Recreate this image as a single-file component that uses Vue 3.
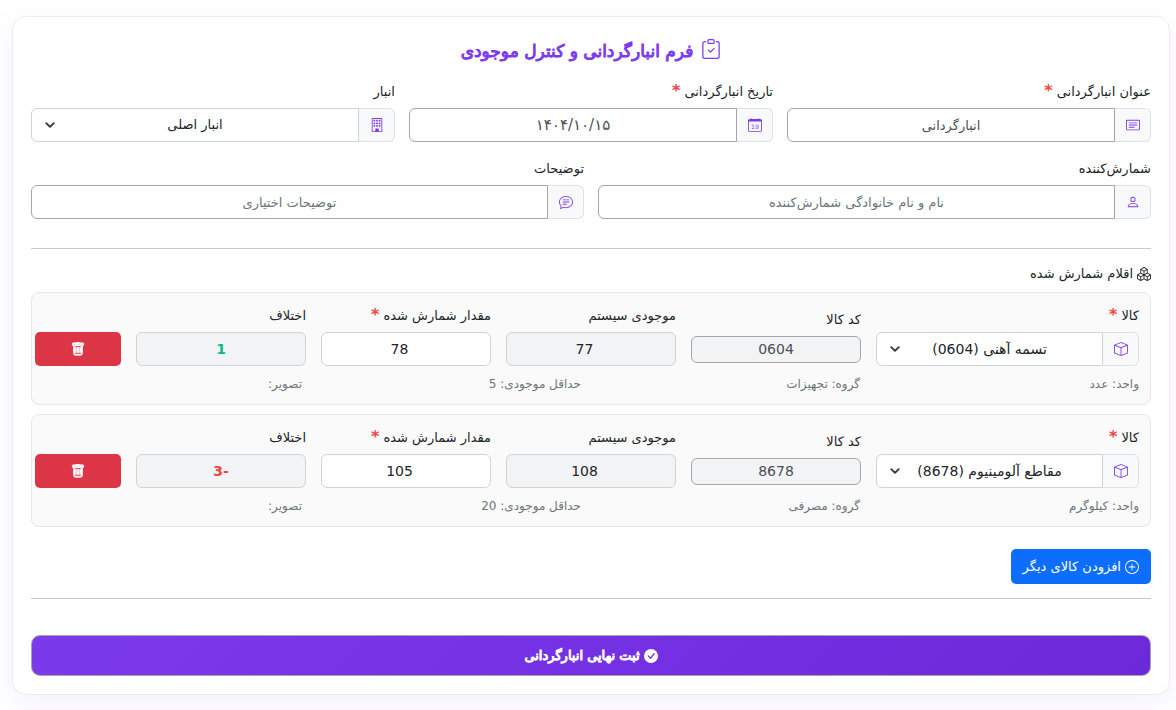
<script setup>
import { reactive, h } from 'vue'

const icons = {
  clipboard: [
    'M10.854 7.146a.5.5 0 0 1 0 .708l-3 3a.5.5 0 0 1-.708 0l-1.5-1.5a.5.5 0 1 1 .708-.708L7.5 9.793l2.646-2.647a.5.5 0 0 1 .708 0',
    'M4 1.5H3a2 2 0 0 0-2 2V14a2 2 0 0 0 2 2h10a2 2 0 0 0 2-2V3.5a2 2 0 0 0-2-2h-1v1h1a1 1 0 0 1 1 1V14a1 1 0 0 1-1 1H3a1 1 0 0 1-1-1V3.5a1 1 0 0 1 1-1h1z',
    'M9.5 1a.5.5 0 0 1 .5.5v1a.5.5 0 0 1-.5.5h-3a.5.5 0 0 1-.5-.5v-1a.5.5 0 0 1 .5-.5zm-3-1A1.5 1.5 0 0 0 5 1.5v1A1.5 1.5 0 0 0 6.5 4h3A1.5 1.5 0 0 0 11 2.5v-1A1.5 1.5 0 0 0 9.5 0z',
  ],
  card: [
    'M14.5 3a.5.5 0 0 1 .5.5v9a.5.5 0 0 1-.5.5h-13a.5.5 0 0 1-.5-.5v-9a.5.5 0 0 1 .5-.5zm-13-1A1.5 1.5 0 0 0 0 3.5v9A1.5 1.5 0 0 0 1.5 14h13a1.5 1.5 0 0 0 1.5-1.5v-9A1.5 1.5 0 0 0 14.5 2z',
    'M3 5.5a.5.5 0 0 1 .5-.5h9a.5.5 0 0 1 0 1h-9a.5.5 0 0 1-.5-.5M3 8a.5.5 0 0 1 .5-.5h9a.5.5 0 0 1 0 1h-9A.5.5 0 0 1 3 8m0 2.5a.5.5 0 0 1 .5-.5h6a.5.5 0 0 1 0 1h-6a.5.5 0 0 1-.5-.5',
  ],
  calendar: [
    'M3.5 0a.5.5 0 0 1 .5.5V1h8V.5a.5.5 0 0 1 1 0V1h1a2 2 0 0 1 2 2v11a2 2 0 0 1-2 2H2a2 2 0 0 1-2-2V3a2 2 0 0 1 2-2h1V.5a.5.5 0 0 1 .5-.5M1 4v10a1 1 0 0 0 1 1h12a1 1 0 0 0 1-1V4z',
  ],
  building: [
    'M4 2.5a.5.5 0 0 1 .5-.5h1a.5.5 0 0 1 .5.5v1a.5.5 0 0 1-.5.5h-1a.5.5 0 0 1-.5-.5zm3 0a.5.5 0 0 1 .5-.5h1a.5.5 0 0 1 .5.5v1a.5.5 0 0 1-.5.5h-1a.5.5 0 0 1-.5-.5zm3.5-.5a.5.5 0 0 0-.5.5v1a.5.5 0 0 0 .5.5h1a.5.5 0 0 0 .5-.5v-1a.5.5 0 0 0-.5-.5zM4 5.5a.5.5 0 0 1 .5-.5h1a.5.5 0 0 1 .5.5v1a.5.5 0 0 1-.5.5h-1a.5.5 0 0 1-.5-.5zM7.5 5a.5.5 0 0 0-.5.5v1a.5.5 0 0 0 .5.5h1a.5.5 0 0 0 .5-.5v-1a.5.5 0 0 0-.5-.5zm2.5.5a.5.5 0 0 1 .5-.5h1a.5.5 0 0 1 .5.5v1a.5.5 0 0 1-.5.5h-1a.5.5 0 0 1-.5-.5zM4.5 8a.5.5 0 0 0-.5.5v1a.5.5 0 0 0 .5.5h1a.5.5 0 0 0 .5-.5v-1a.5.5 0 0 0-.5-.5zm2.5.5a.5.5 0 0 1 .5-.5h1a.5.5 0 0 1 .5.5v1a.5.5 0 0 1-.5.5h-1a.5.5 0 0 1-.5-.5zm3.5-.5a.5.5 0 0 0-.5.5v1a.5.5 0 0 0 .5.5h1a.5.5 0 0 0 .5-.5v-1a.5.5 0 0 0-.5-.5z',
    'M2 1a1 1 0 0 1 1-1h10a1 1 0 0 1 1 1v14a1 1 0 0 1-1 1H3a1 1 0 0 1-1-1zm11 0H3v14h3v-2.5a.5.5 0 0 1 .5-.5h3a.5.5 0 0 1 .5.5V15h3z',
  ],
  person: [
    'M8 8a3 3 0 1 0 0-6 3 3 0 0 0 0 6m2-3a2 2 0 1 1-4 0 2 2 0 0 1 4 0m4 8c0 1-1 1-1 1H3s-1 0-1-1 1-4 6-4 6 3 6 4m-1-.004c-.001-.246-.154-.986-.832-1.664C11.516 10.68 10.289 10 8 10s-3.516.68-4.168 1.332c-.678.678-.83 1.418-.832 1.664z',
  ],
  chat: [
    'M2.678 11.894a1 1 0 0 1 .287.801 11 11 0 0 1-.398 2c1.395-.323 2.247-.697 2.634-.893a1 1 0 0 1 .71-.074A8 8 0 0 0 8 14c3.996 0 7-2.807 7-6s-3.004-6-7-6-7 2.808-7 6c0 1.468.617 2.83 1.678 3.894m-.493 3.905a22 22 0 0 1-.713.129c-.2.032-.352-.176-.273-.362a10 10 0 0 0 .244-.637l.003-.01c.248-.72.45-1.548.524-2.319C.743 11.37 0 9.76 0 8c0-3.866 3.582-7 8-7s8 3.134 8 7-3.582 7-8 7a9 9 0 0 1-2.347-.306c-.52.263-1.639.742-3.468 1.105',
    'M4 5.5a.5.5 0 0 1 .5-.5h7a.5.5 0 0 1 0 1h-7a.5.5 0 0 1-.5-.5M4 8a.5.5 0 0 1 .5-.5h7a.5.5 0 0 1 0 1h-7A.5.5 0 0 1 4 8m0 2.5a.5.5 0 0 1 .5-.5h4a.5.5 0 0 1 0 1h-4a.5.5 0 0 1-.5-.5',
  ],
  box: [
    'M8.186 1.113a.5.5 0 0 0-.372 0L1.846 3.5 8 5.961 14.154 3.5zM15 4.239l-6.5 2.6v7.922l6.5-2.6V4.24zM7.5 14.762V6.838L1 4.239v7.923zM7.443.184a1.5 1.5 0 0 1 1.114 0l7.129 2.852A.5.5 0 0 1 16 3.5v8.662a1 1 0 0 1-.629.928l-7.185 2.874a.5.5 0 0 1-.372 0L.63 13.09a1 1 0 0 1-.63-.928V3.5a.5.5 0 0 1 .314-.464z',
  ],
  boxes: [
    'M7.752.066a.5.5 0 0 1 .496 0l3.75 2.143a.5.5 0 0 1 .252.434v3.995l3.498 2A.5.5 0 0 1 16 9.07v4.286a.5.5 0 0 1-.252.434l-3.75 2.143a.5.5 0 0 1-.496 0l-3.502-2-3.502 2.001a.5.5 0 0 1-.496 0l-3.75-2.143A.5.5 0 0 1 0 13.357V9.071a.5.5 0 0 1 .252-.434L3.75 6.638V2.643a.5.5 0 0 1 .252-.434zM4.25 7.504 1.508 9.071l2.742 1.567 2.742-1.567zM7.5 9.933l-2.75 1.571v3.134l2.75-1.571zm1 3.134 2.75 1.571v-3.134L8.5 9.933zm.508-3.996 2.742 1.567 2.742-1.567-2.742-1.567zm2.242-2.433V3.504L8.5 5.076V8.21zM7.5 8.21V5.076L4.75 3.504v3.134zM5.258 2.643 8 4.21l2.742-1.567L8 1.076zM15 9.933l-2.75 1.571v3.134L15 13.067zM3.75 14.638v-3.134L1 9.933v3.134z',
  ],
  trash: [
    'M5.5 5.5A.5.5 0 0 1 6 6v6a.5.5 0 0 1-1 0V6a.5.5 0 0 1 .5-.5m2.5 0a.5.5 0 0 1 .5.5v6a.5.5 0 0 1-1 0V6a.5.5 0 0 1 .5-.5m3 .5a.5.5 0 0 0-1 0v6a.5.5 0 0 0 1 0z',
    'M14.5 3a1 1 0 0 1-1 1H13v9a2 2 0 0 1-2 2H5a2 2 0 0 1-2-2V4h-.5a1 1 0 0 1-1-1V2a1 1 0 0 1 1-1H6a1 1 0 0 1 1-1h2a1 1 0 0 1 1 1h3.5a1 1 0 0 1 1 1zM4.118 4 4 4.059V13a1 1 0 0 0 1 1h6a1 1 0 0 0 1-1V4.059L11.882 4zM2.5 3h11V2h-11z',
  ],
  plus: [
    'M8 15A7 7 0 1 1 8 1a7 7 0 0 1 0 14m0 1A8 8 0 1 0 8 0a8 8 0 0 0 0 16',
    'M8 4a.5.5 0 0 1 .5.5v3h3a.5.5 0 0 1 0 1h-3v3a.5.5 0 0 1-1 0v-3h-3a.5.5 0 0 1 0-1h3v-3A.5.5 0 0 1 8 4',
  ],
  check: [
    'M16 8A8 8 0 1 1 0 8a8 8 0 0 1 16 0m-3.97-3.03a.75.75 0 0 0-1.08.022L7.477 9.417 5.384 7.323a.75.75 0 0 0-1.06 1.06L6.97 11.03a.75.75 0 0 0 1.079-.02l3.992-4.99a.75.75 0 0 0-.01-1.05z',
  ],
}

const Icon = (props) =>
  h('svg', { viewBox: '0 0 16 16', fill: 'currentColor', 'aria-hidden': 'true' }, [
    ...icons[props.name].map((d) => h('path', { d })),
    props.name === 'calendar'
      ? h('text', { x: 8, y: 12, 'font-size': 7, 'text-anchor': 'middle', direction: 'ltr' }, '19')
      : null,
  ])
Icon.props = ['name']

const form = reactive({
  title: 'انبارگردانی',
  date: '۱۴۰۴/۱۰/۱۵',
  warehouse: 'انبار اصلی',
  counter: '',
  notes: '',
})

const items = reactive([
  { name: 'تسمه آهنی (0604)', code: '0604', stock: 77, counted: 78, unit: 'عدد', group: 'تجهیزات', min: 5 },
  { name: 'مقاطع آلومینیوم (8678)', code: '8678', stock: 108, counted: 105, unit: 'کیلوگرم', group: 'مصرفی', min: 20 },
])

const diff = (item) => item.counted - item.stock
</script>

<template>
  <main class="page" dir="rtl" lang="fa">
    <form class="card" @submit.prevent>
      <h1 class="title"><Icon name="clipboard" class="title-icon" />فرم انبارگردانی و کنترل موجودی</h1>

      <div class="fields three">
        <div class="field">
          <label for="title">عنوان انبارگردانی <b class="req">*</b></label>
          <div class="group">
            <span class="addon"><Icon name="card" class="icon" /></span>
            <input id="title" v-model="form.title" class="control strong" type="text" />
          </div>
        </div>
        <div class="field">
          <label for="date">تاریخ انبارگردانی <b class="req">*</b></label>
          <div class="group">
            <span class="addon"><Icon name="calendar" class="icon" /></span>
            <input id="date" v-model="form.date" class="control strong date" type="text" />
          </div>
        </div>
        <div class="field">
          <label for="warehouse">انبار</label>
          <div class="group">
            <span class="addon"><Icon name="building" class="icon" /></span>
            <div class="select">
              <select id="warehouse" v-model="form.warehouse" class="control">
                <option>انبار اصلی</option>
              </select>
              <svg class="chevron" viewBox="0 0 16 16" aria-hidden="true"><path d="m2 5 6 6 6-6" /></svg>
            </div>
          </div>
        </div>
      </div>

      <div class="fields two">
        <div class="field">
          <label for="counter">شمارش‌کننده</label>
          <div class="group">
            <span class="addon"><Icon name="person" class="icon" /></span>
            <input id="counter" v-model="form.counter" class="control strong" type="text" placeholder="نام و نام خانوادگی شمارش‌کننده" />
          </div>
        </div>
        <div class="field">
          <label for="notes">توضیحات</label>
          <div class="group">
            <span class="addon"><Icon name="chat" class="icon" /></span>
            <input id="notes" v-model="form.notes" class="control strong" type="text" placeholder="توضیحات اختیاری" />
          </div>
        </div>
      </div>

      <hr class="rule" />

      <h2 class="subtitle"><Icon name="boxes" class="icon" />اقلام شمارش شده</h2>

      <section v-for="(item, i) in items" :key="item.code" class="item">
        <div class="item-row">
          <div class="field">
            <label :for="`product-${i}`">کالا <b class="req">*</b></label>
            <div class="group">
              <span class="addon"><Icon name="box" class="icon" /></span>
              <div class="select">
                <select :id="`product-${i}`" v-model="item.name" class="control">
                  <option v-for="o in items" :key="o.code">{{ o.name }}</option>
                </select>
                <svg class="chevron" viewBox="0 0 16 16" aria-hidden="true"><path d="m2 5 6 6 6-6" /></svg>
              </div>
            </div>
          </div>
          <div class="field">
            <label :for="`code-${i}`">کد کالا</label>
            <input :id="`code-${i}`" class="control strong small" type="text" :value="item.code" readonly />
          </div>
          <div class="field">
            <label :for="`stock-${i}`">موجودی سیستم</label>
            <input :id="`stock-${i}`" class="control muted number" type="text" :value="item.stock" readonly />
          </div>
          <div class="field">
            <label :for="`counted-${i}`">مقدار شمارش شده <b class="req">*</b></label>
            <input :id="`counted-${i}`" v-model.number="item.counted" class="control number" type="text" inputmode="numeric" />
          </div>
          <div class="field">
            <label :for="`diff-${i}`">اختلاف</label>
            <input
              :id="`diff-${i}`"
              class="control muted diff"
              :class="diff(item) < 0 ? 'minus' : 'plus'"
              type="text"
              :value="diff(item)"
              readonly
            />
          </div>
          <button class="remove" type="button" aria-label="حذف"><Icon name="trash" class="icon" /></button>
        </div>
        <div class="meta">
          <span>واحد: {{ item.unit }}</span>
          <span>گروه: {{ item.group }}</span>
          <span>حداقل موجودی: {{ item.min }}</span>
          <span>تصویر:</span>
        </div>
      </section>

      <button class="add" type="button"><Icon name="plus" class="icon" />افزودن کالای دیگر</button>

      <hr class="rule" />

      <button class="submit" type="submit"><Icon name="check" class="icon" />ثبت نهایی انبارگردانی</button>
    </form>
  </main>
</template>

<style>
body {
  background: #fff;
}
</style>

<style scoped>
.page,
.page * {
  box-sizing: border-box;
}
.page {
  padding: 16px 6px 16px 12px;
  overflow: hidden;
  font-family: 'DejaVu Sans', 'Noto Sans', sans-serif;
  font-size: 13px;
  line-height: 20px;
  color: #212529;
}
.card {
  padding: 20px 18px 18px;
  border: 1px solid #ececf1;
  border-radius: 14px;
  background: #fff;
  box-shadow: 0 8px 30px rgba(124, 58, 237, 0.08);
}
.title {
  display: flex;
  align-items: center;
  justify-content: center;
  gap: 8px;
  margin: 0 0 17px;
  font-size: 17px;
  line-height: 28px;
  font-weight: 400;
  -webkit-text-stroke: 1px currentColor;
  color: #7c3aed;
}
.title-icon {
  width: 20px;
  height: 20px;
  margin-bottom: 4px;
}
.icon {
  display: block;
  flex: none;
  width: 14px;
  height: 14px;
}
.fields {
  display: grid;
  gap: 14px;
}
.three {
  grid-template-columns: repeat(3, 1fr);
  margin-bottom: 17px;
}
.two {
  grid-template-columns: repeat(2, 1fr);
}
.field {
  display: flex;
  flex-direction: column;
  gap: 6px;
  min-width: 0;
}
.req {
  color: #ef4444;
  font-size: 16px;
  line-height: 16px;
}
.group {
  display: flex;
}
.addon {
  display: flex;
  align-items: center;
  justify-content: center;
  width: 36px;
  border: 1px solid #dee2e6;
  border-left: 0;
  border-radius: 0 6px 6px 0;
  background: #f8f9fa;
  color: #7c3aed;
}
.select {
  position: relative;
  display: flex;
  flex: 1;
  min-width: 0;
}
.control {
  appearance: none;
  width: 100%;
  min-width: 0;
  height: 34px;
  padding: 0 12px;
  border: 1px solid #ced4da;
  border-radius: 6px;
  background: #fff;
  color: #212529;
  font: inherit;
  text-align: center;
  text-align-last: center;
}
.group .control {
  flex: 1;
  border-radius: 6px 0 0 6px;
}
.strong {
  border-color: #a6a6a6;
  color: #495057;
}
.date {
  font-size: 15px;
}
.control::placeholder {
  color: #6c757d;
  opacity: 1;
}
.small {
  height: 27px;
  background: #f1f3f5;
}
.muted {
  background: #f1f3f5;
}
.number {
  padding: 0 20px 0 7px;
}
.diff {
  font-weight: 700;
}
.plus {
  color: #10b981;
}
.minus {
  color: #ef4444;
}
.chevron {
  position: absolute;
  left: 14px;
  top: 12px;
  width: 10px;
  height: 10px;
  fill: none;
  stroke: #343a40;
  stroke-width: 3;
  stroke-linecap: round;
  stroke-linejoin: round;
  pointer-events: none;
}
.rule {
  height: 1px;
  margin: 29px 0 15px;
  border: 0;
  background: #c8c9ca;
}
.subtitle {
  display: flex;
  align-items: center;
  gap: 4px;
  margin: 0 0 8px;
  font-size: 13px;
  line-height: 20px;
  font-weight: 400;
}
.item {
  margin-bottom: 9px;
  padding: 13px 11px 10px 3px;
  border: 1px solid #e5e7eb;
  border-radius: 8px;
  background: #fafafa;
}
.item-row {
  display: grid;
  grid-template-columns: 263fr 170fr 170fr 170fr 170fr 86fr;
  gap: 15px;
  align-items: center;
}
.item .control {
  font-size: 14px;
}
.remove {
  display: flex;
  align-items: center;
  justify-content: center;
  align-self: end;
  height: 34px;
  padding: 0;
  border: 0;
  border-radius: 5px;
  background: #dc3545;
  color: #fff;
}
.remove .icon {
  stroke: currentColor;
  stroke-width: 1;
}
.meta {
  display: grid;
  grid-template-columns: repeat(4, 1fr);
  gap: 12px;
  margin-top: 8px;
  font-size: 12px;
  color: #6c757d;
}
.add {
  display: flex;
  align-items: center;
  gap: 4px;
  height: 35px;
  margin-top: 22px;
  padding: 0 12px;
  border: 0;
  border-radius: 5px;
  background: #0d6efd;
  color: #fff;
  font: inherit;
}
.add + .rule {
  margin: 14px 0 36px;
}
.submit {
  display: flex;
  align-items: center;
  justify-content: center;
  gap: 4px;
  width: 100%;
  height: 41px;
  border: 1px solid #a6a6a6;
  border-radius: 9px;
  background: linear-gradient(135deg, #7c3aed, #6d28d9);
  color: #fff;
  font: inherit;
  -webkit-text-stroke: 1px currentColor;
}
</style>
